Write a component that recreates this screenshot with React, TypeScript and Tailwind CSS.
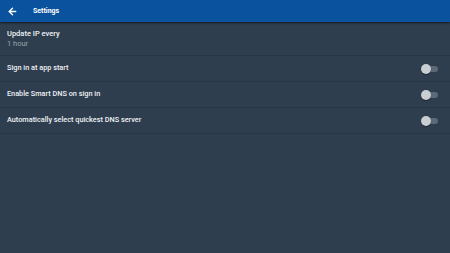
import { ArrowLeft } from 'lucide-react';

const toggles = [
  'Sign in at app start',
  'Enable Smart DNS on sign in',
  'Automatically select quickest DNS server',
];

function Toggle() {
  return (
    <div className="relative w-[17px] h-[10px] flex items-center">
      <div className="w-[14px] h-[6px] ml-[3px] rounded-full bg-[#5d6977]" />
      <div className="absolute left-0 top-0 w-[10px] h-[10px] rounded-full bg-[#c9ced3] shadow-[0_1px_1px_rgba(0,0,0,0.4)]" />
    </div>
  );
}

export default function App() {
  return (
    <div className="w-[450px] h-[253px] bg-[#2f3e4f] flex flex-col font-['Roboto',sans-serif] overflow-hidden">
      {/* Toolbar */}
      <div className="h-[22px] bg-[#0a529e] flex items-center shadow-[0_1px_2px_rgba(0,0,0,0.6)] z-10">
        <ArrowLeft size={11} strokeWidth={3} className="ml-[7px] text-white" />
        <span className="ml-[15px] text-[7px] font-bold text-white">Settings</span>
      </div>

      {/* Update IP */}
      <div className="h-[33px] flex flex-col justify-center pl-[7px]">
        <span className="text-[7.5px] font-medium text-[#eef1f4] leading-[10px]">Update IP every</span>
        <span className="text-[7.5px] text-[#98a3ae] leading-[10px]">1 hour</span>
      </div>
      <div className="h-px bg-[#283645]" />

      {toggles.map((label) => (
        <div key={label}>
          <div className="h-[25px] flex items-center justify-between pl-[7px] pr-[12px]">
            <span className="text-[7.3px] font-medium text-[#eef1f4]">{label}</span>
            <Toggle />
          </div>
          <div className="h-px bg-[#283645]" />
        </div>
      ))}
    </div>
  );
}
